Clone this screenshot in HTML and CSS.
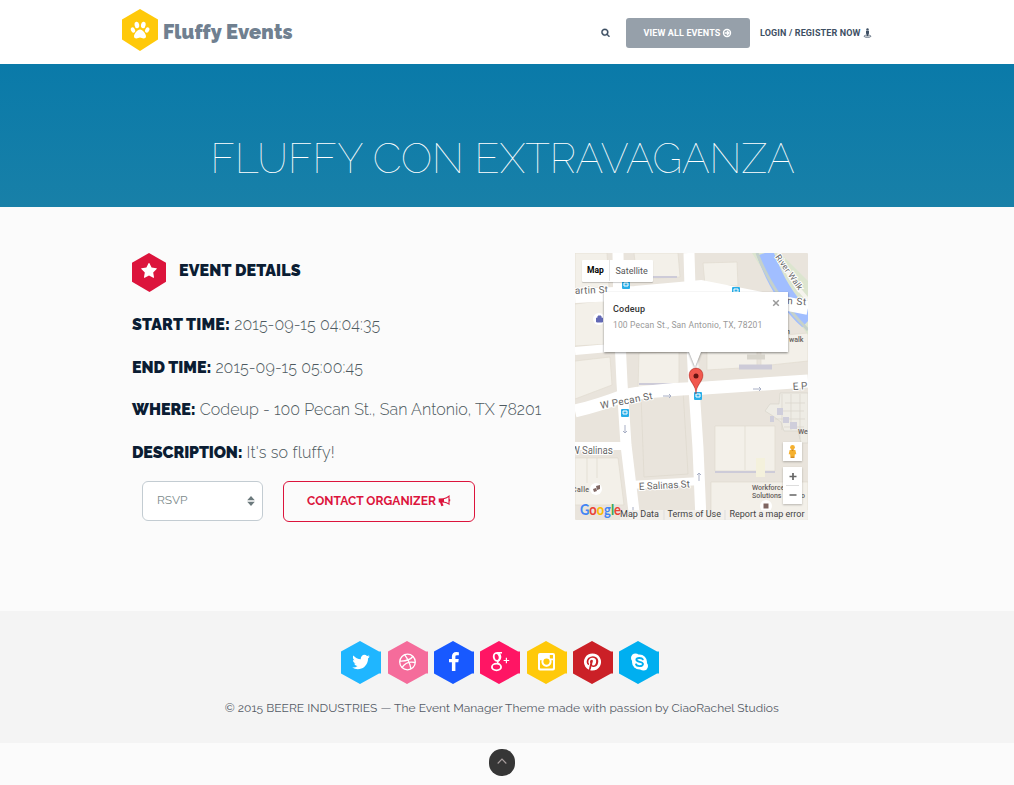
FILE: index.html
```
<!DOCTYPE html>
<html lang="en">
<head>
<meta charset="utf-8">
<title>Fluffy Events</title>
<link rel="stylesheet" href="styles.css">
</head>
<body>
<header class="header">
  <a class="brand">
    <svg class="brand-hex" viewBox="0 0 36 42"><path fill="#ffc90a" d="M18 0 36 10.500v20L18 42 0 30.500v-20z"/><g fill="#fff"><ellipse cx="14.900" cy="16" rx="2.300" ry="3.300" transform="rotate(-10 14.900 16)"/><ellipse cx="21.300" cy="16" rx="2.300" ry="3.300" transform="rotate(10 21.300 16)"/><ellipse cx="11" cy="21" rx="2" ry="2.800" transform="rotate(-25 11 21)"/><ellipse cx="25.200" cy="21" rx="2" ry="2.800" transform="rotate(25 25.200 21)"/><path d="M18 20.500c-2.600 0-6 4.300-6 6.700 0 1.600 1 2.200 2.400 2.200s2.200-.8 3.600-.8 2.200.8 3.600.8 2.400-.6 2.400-2.200c0-2.400-3.400-6.700-6-6.700z"/></g></svg>
    <span class="brand-name">Fluffy Events</span>
  </a>
  <nav class="nav">
    <svg class="ico-search" viewBox="0 0 1792 1792"><path fill="#3e4f63" stroke="#3e4f63" stroke-width="60" d="M1216 832q0-185-131.500-316.500t-316.500-131.500-316.500 131.500-131.500 316.500 131.500 316.500 316.500 131.500 316.500-131.500 131.500-316.500zm512 832q0 52-38 90t-90 38q-54 0-90-38l-343-342q-179 124-399 124-143 0-273.500-55.500t-225-150-150-225-55.500-273.500 55.500-273.500 150-225 225-150 273.500-55.500 273.500 55.500 225 150 150 225 55.500 273.500q0 220-124 399l343 343q37 37 37 90z"/></svg>
    <a class="btn-view"><span>VIEW ALL EVENTS</span><svg class="ico-nav" viewBox="0 0 10 10"><circle cx="5" cy="5" r="3.500" fill="none" stroke="#fff" stroke-width="1.400"/><path d="M2.600 5h4M5 3l2 2-2 2" fill="none" stroke="#fff" stroke-width="1.300"/></svg></a>
    <a class="login"><span>LOGIN / REGISTER NOW</span><svg class="ico-nav" viewBox="0 0 10 10"><g fill="#3e4f63"><circle cx="4.500" cy="1.400" r="1.200"/><path d="M3 2.800h3v3H5.600v2.400H3.400V5.800H3z"/></g><path d="M2.800 7.200C0 7.800.8 9.300 4.500 9.300s4.500-1.500 1.700-2.100" fill="none" stroke="#3e4f63" stroke-width=".8"/></svg></a>
  </nav>
</header>

<section class="banner"><h1 class="banner-title">FLUFFY CON EXTRAVAGANZA</h1></section>

<main class="main">
  <section class="details">
    <div class="details-head">
      <svg class="details-hex" viewBox="0 0 34 39"><path fill="#dc143c" d="M17 0 34 9.800v19L17.500 39 0 28.800v-19z"/><svg x="8.500" y="9.500" width="17" height="17" viewBox="0 0 1792 1792"><path fill="#fff" d="M1728 647q0 22-26 48l-363 354 86 500q1 7 1 20 0 21-10.500 35.500t-30.500 14.500q-19 0-40-12l-449-236-449 236q-22 12-40 12-21 0-31.500-14.500t-10.500-35.500q0-6 2-20l86-500-364-354q-25-27-25-48 0-37 56-46l502-73 225-455q19-41 49-41t49 41l225 455 502 73q56 9 56 46z"/></svg></svg>
      <h2 class="details-title">EVENT DETAILS</h2>
    </div>
    <p class="row"><b class="l-start">START TIME:</b><span class="v-time">2015-09-15 04:04:35</span></p>
    <p class="row row-end"><b>END TIME:</b><span class="v-time">2015-09-15 05:00:45</span></p>
    <p class="row"><b>WHERE:</b><span class="v-where">Codeup - 100 Pecan St., San Antonio, TX 78201</span></p>
    <p class="row"><b class="l-desc">DESCRIPTION:</b><span class="v-desc">It's so fluffy!</span></p>
    <div class="actions">
      <div class="select"><span>RSVP</span><svg class="ico-sort" viewBox="0 0 8 10"><path fill="#6c7a7d" d="M4 0 7.800 4.300H.2zM4 10 .2 5.700h7.600z"/></svg></div>
      <a class="btn-contact"><span>CONTACT ORGANIZER</span><svg class="ico-horn" viewBox="0 0 13 12"><path fill="#dc143c" d="M.6 3.600 6 3.200v4.300H4.200l1.400 3-2.200.7L2 7.600.8 7.400z"/><path fill="none" stroke="#dc143c" stroke-width="1.100" d="M5.500 3.700C7.900 3.300 9.800 2.300 11 1.200v7.900C9.700 8.100 7.900 7.300 5.500 7"/><path fill="#dc143c" d="M11 4.200h1.200v2H11z"/></svg></a>
    </div>
  </section>

  <section class="map">
    <svg class="map-art" viewBox="0 0 233 267">
      <rect width="233" height="267" fill="#e9e4dc"/>
      <g fill="#f3f0e9" stroke="#e1dbd0" stroke-width=".7">
        <path d="M0 0h32l2 34-34 3zM59 0h44l2 24-43 2zM128 10l34-1 1 24-33-1z"/>
        <path d="M0 51l32-4 4 44-36 2zM0 108l35-4 2 28-37 14zM64 100l40-1v31l-41 6z"/>
        <path d="M132 92h50v22l-50 3zM186 84l47-4v28l-47 5zM0 205h43l6 47H0zM140 173h60v45h-60zM136 229h97v38h-97z"/>
      </g>
      <g fill="none" stroke="#dcd6cb" stroke-width=".6"><path d="M66 142l42-5 5 84-44 3zM125 134l39-3M12 205v25M22 205v20M170 173v44"/></g>
      <path d="M66 24h36M64 131h42M140 219h60" stroke="#cdcbd8" stroke-width="2"/>
      <path d="M164 114h33" stroke="#cdcbd8" stroke-width="5"/>
      <path d="M172 104h18" stroke="#d8d5cc" stroke-width="5"/>
      <path d="M177 0h28l28 28v54Q204 43 177 0z" fill="#dce5cf"/>
      <path d="M190 0Q205 43 233 68" fill="none" stroke="#a1beff" stroke-width="17"/>
      <path d="M204 0Q211 23 233 47" fill="none" stroke="#f6f4ee" stroke-width="4"/>
      <path d="M182 0Q198 42 233 77" fill="none" stroke="#c5d1cb" stroke-width="3"/>
      <g fill="none" stroke="#fff" stroke-width="11">
        <path d="M43 0 44 65 47 130 51 192 60 267M114 0l2 70 3 65 4 60 3 72" />
        <path d="M0 43 60 40 126 34 233 55" stroke-width="14"/>
        <path d="M0 158Q22 153 48 143C75 137 110 136 130 135L233 128" stroke-width="13"/>
        <path d="M0 193h51M55 232l71-4M0 98l45-4" stroke-width="8"/>
      </g>
      <g fill="#eeece5" stroke="#d9d5cc" stroke-width=".7"><path d="M205 140h28v50h-7l-3-12h-14l-3-9-8-6-8-5 5-7h9z"/><path d="M210 150h20M205 158h24M200 166h30M209 174h20M207 141v36M216 141v36M225 141v45"/></g>
      <g fill="#cfcedb"><path d="M202 155h6v7h-6zM208 164h6v6h-6zM215 169h7v7h-7zM195 163h4v6h-4z"/></g>
      <path d="M181 205h9v19h-9z" fill="#f4f1dc"/>
      <g fill="none" stroke="#a8afc5" stroke-width="1"><path d="M88 143h8m-2-2 2 2-2 2M178 136h8m-2-2 2 2-2 2M50 172v8m-2-2 2 2 2-2M58 254v8m-2-2 2 2 2-2M124 228v-8m-2 2 2-2 2 2"/></g>
      <g fill="#28aee8"><rect x="47" y="28" width="8" height="8" rx="1"/><rect x="157" y="34" width="8" height="8" rx="1"/><rect x="46" y="156" width="8" height="8" rx="1"/><rect x="119" y="139" width="8" height="8" rx="1"/></g>
      <g fill="none" stroke="#fff"><path d="M49 30h4v3h-4zM159 36h4v3h-4zM48 158h4v3h-4zM121 141h4v3h-4z"/></g>
      <circle cx="24" cy="66" r="6" fill="#fff"/><path d="M21.500 65h6v4h-6zM23 65v-2h3v2" fill="#6269b5" stroke="#6269b5"/>
      <circle cx="21" cy="236" r="6" fill="#fff"/><path d="M18 236l3-1 1 3-3 1zM21 233l4-1v4l-3 1z" fill="#806763"/>
      <circle cx="191" cy="253" r="6" fill="#fff"/><path d="M188.500 250.500h5v5h-5z" fill="#806763"/>
      <g class="road-text">
        <text x="0" y="41" textLength="33" transform="rotate(-2 0 41)">artin St</text>
        <text x="212" y="51" textLength="19" transform="rotate(4 212 51)">n St</text>
        <text x="26" y="156" textLength="53" transform="rotate(-11 26 156)">W Pecan St</text>
        <text x="218" y="137" transform="rotate(-4 218 137)">E P</text>
        <text x="-4" y="201" textLength="42">W Salinas</text>
        <text x="64" y="237" textLength="51" transform="rotate(-3 64 237)">E Salinas St</text>
        <text class="river" x="200" y="4" textLength="41" transform="rotate(55 200 4)">River Walk</text>
      </g>
      <g class="place-text"><text x="-3" y="239" textLength="17">Calle</text><text x="177" y="237">Workforce</text><text x="177" y="245">Solutions</text><text x="223" y="181">We</text><text x="214" y="89">walk</text><text x="211" y="81">n</text><text x="226" y="245">o</text></g>
      <path d="M45 257h188v10H45z" fill="#f2f0ec" opacity=".8"/>
      <text class="google" x="5" y="262" textLength="41" lengthAdjust="spacingAndGlyphs"><tspan fill="#4285f4">G</tspan><tspan fill="#ea4335">o</tspan><tspan fill="#fbbc05">o</tspan><tspan fill="#4285f4">g</tspan><tspan fill="#34a853">l</tspan><tspan fill="#ea4335">e</tspan></text>
      <path fill="#ce3e35" stroke="#a83028" stroke-width=".4" d="M121 141c0-9-7-12-7-19a7 7 0 0 1 14 0c0 7-7 10-7 19z"/>
      <path fill="#f1584e" d="M121 140c0-9-6.500-12-6.500-18a6.500 6.500 0 0 1 13 0c0 6-6.500 9-6.500 18z"/><circle cx="121" cy="123" r="2.500" fill="#651411"/>
      <g class="credits"><text x="45" y="264" textLength="39">Map Data</text><text x="92.500" y="264" textLength="53.500">Terms of Use</text><text x="154.500" y="264" textLength="75">Report a map error</text></g>
      <path d="M89 257v10M150 257v10" stroke="#ddd"/>
      <path class="bubble" d="M29 39h184v60h-87l-6 15-6-15H29z"/>
    </svg>
    <div class="map-type"><b>Map</b><span>Satellite</span></div>
    <div class="info"><div class="info-name">Codeup</div><div class="info-addr">100 Pecan St., San Antonio, TX, 78201</div><svg class="info-close" viewBox="0 0 8 8"><path d="M1.200 1.200l5.600 5.600M6.800 1.200 1.200 6.800" stroke="#999" stroke-width="1.500"/></svg></div>
    <svg class="pegman" viewBox="0 0 20 20"><circle cx="10" cy="5.600" r="2.500" fill="#f5b02e"/><path d="M7 8.300h6l1 4.700h-1.500L12 16.500H8L7.500 13H6z" fill="#f5b02e"/><path d="M8.200 8h3.600L10 9.500zM8 15.500h4v1H8z" fill="#c77a14"/></svg>
    <svg class="zoomer" viewBox="0 0 19 37"><path d="M6.500 9.500h7M10 6v7M6.500 28h7" stroke="#666" stroke-width="1.700"/><path d="M3 18.500h13" stroke="#ddd"/></svg>
  </section>
</main>

<footer class="footer">
  <div class="social">
    <svg class="hex" viewBox="0 0 40 43"><path fill="#1fb6ff" d="M19 0 38 10.500h2v22h-2L19 43 0 32.500v-22z"/><svg x="10" y="11" width="20" height="20" viewBox="0 0 1792 1792"><path fill="#fff" d="M1684 408q-67 98-162 167 1 14 1 42 0 130-38 259.500t-115.500 248.500-184.500 210.500-258 146-323 54.500q-271 0-496-145 35 4 78 4 225 0 401-138-105-2-188-64.500t-114-159.500q33 5 61 5 43 0 85-11-112-23-185.500-111.500t-73.500-205.500v-4q68 38 146 41-66-44-105-115t-39-154q0-88 44-163 121 149 294.500 238.500t371.500 99.500q-8-38-8-74 0-134 94.500-228.500t228.500-94.500q140 0 236 102 109-21 205-78-37 115-142 178 93-10 186-50z"/></svg></svg>
    <svg class="hex" viewBox="0 0 40 43"><path fill="#f56c9b" d="M19 0 38 10.500h2v22h-2L19 43 0 32.500v-22z"/><g fill="none" stroke="#fff" stroke-width="1.300"><circle cx="19.500" cy="21" r="7.800"/><path d="M16.500 13.700c3.500 4.500 5.500 9 6.500 14.300M11.800 20c6 .3 10.500-1 13.500-5M14 26.700c3-5 7.500-6.500 13.200-5.200"/></g></svg>
    <svg class="hex" viewBox="0 0 40 43"><path fill="#1859ff" d="M19 0 38 10.500h2v22h-2L19 43 0 32.500v-22z"/><svg x="9.500" y="11" width="20.500" height="20.500" viewBox="0 0 1792 1792"><path fill="#fff" d="M1343 12v264h-157q-86 0-116 36t-30 108v189h293l-39 296h-254v759h-306v-759h-255v-296h255v-218q0-186 104-288.500t277-102.500q147 0 228 12z"/></svg></svg>
    <svg class="hex" viewBox="0 0 40 43"><path fill="#ff1564" d="M19 0 38 10.500h2v22h-2L19 43 0 32.500v-22z"/><g fill="none" stroke="#fff"><ellipse cx="16.700" cy="16" rx="2.900" ry="3.900" stroke-width="1.900" transform="rotate(-12 16.700 16)"/><path d="M16.500 11.700h5.500M19 12.200c2.200 2.200 2.200 5.300 0 7.200-3 2-.6 3 1 4.600" stroke-width="1.400"/><ellipse cx="16.500" cy="26" rx="4.600" ry="3.300" stroke-width="1.800"/><path d="M23.600 19.500h5.600M26.400 16.700v5.600" stroke-width="1.200"/></g></svg>
    <svg class="hex" viewBox="0 0 40 43"><path fill="#ffc90a" d="M19 0 38 10.500h2v22h-2L19 43 0 32.500v-22z"/><path fill="#fff" fill-rule="evenodd" d="M13 12h13a2 2 0 0 1 2 2v13.500a2 2 0 0 1-2 2H13a2 2 0 0 1-2-2V14a2 2 0 0 1 2-2zm9.800 2v3.400h3.200V14zM13 19.300v7.200c0 .7.300 1 1 1h11c.7 0 1-.3 1-1v-7.200h-1.700a5 5 0 1 1-9.600 0z"/><circle cx="19.500" cy="20.600" r="3.900" fill="none" stroke="#fff" stroke-width="1.800"/><circle cx="19.500" cy="20.600" r="3.100" fill="#ffc90a"/></svg>
    <svg class="hex" viewBox="0 0 40 43"><path fill="#cb2027" d="M19 0 38 10.500h2v22h-2L19 43 0 32.500v-22z"/><svg x="9.500" y="11" width="20" height="20" viewBox="0 0 1792 1792"><path fill="#fff" d="M1664 896q0 209-103 385.500t-279.500 279.500-385.500 103q-111 0-218-32 59-93 78-164 9-34 54-211 20 39 73 67.500t114 28.500q121 0 216-68.500t147-188.500 52-270q0-114-59.500-214t-172.500-163-255-63q-105 0-196 29t-154.500 77-109 110.500-67 129.500-21.500 134q0 104 40 183t117 111q30 12 38-20 2-7 8-31t8-30q6-23-11-43-51-61-51-151 0-151 104.500-259.500t273.500-108.500q151 0 235.500 82t84.500 213q0 170-68.500 289t-175.500 119q-61 0-98-43.500t-23-104.500q8-35 26.500-93.500t30-103 11.500-75.500q0-50-27-83t-77-33q-62 0-105 57t-43 142q0 73 25 122l-99 418q-17 70-13 177-206-91-333-281t-127-423q0-209 103-385.500t279.500-279.500 385.500-103 385.500 103 279.500 279.500 103 385.500z"/></svg></svg>
    <svg class="hex" viewBox="0 0 40 43"><path fill="#00aff0" d="M19 0 38 10.500h2v22h-2L19 43 0 32.500v-22z"/><circle cx="20.500" cy="21" r="7.500" fill="#fff"/><circle cx="16.500" cy="17" r="4.500" fill="#fff"/><circle cx="24.500" cy="25" r="4.500" fill="#fff"/><path d="M23.800 18.300c-.8-1.700-6.400-2.100-6.400.4 0 2.900 6.600 1.300 6.600 4.400 0 2.800-6.400 2.500-7 .2" fill="none" stroke="#00aff0" stroke-width="1.900" stroke-linecap="round"/></svg>
  </div>
  <p class="copy">© 2015 BEERE INDUSTRIES — The Event Manager Theme made with passion by CiaoRachel Studios</p>
</footer>
<div class="totop"><svg class="totop-btn" viewBox="0 0 26 27"><rect width="26" height="27" rx="12.500" fill="#363636"/><path d="M8.700 14.500 13 10l4.300 4.500" fill="none" stroke="#aaa0a0" stroke-width="1.100"/></svg></div>
</body>
</html>
```
FILE: styles.css
```
* { box-sizing: border-box; }
body { margin: 0; background: #fbfbfb; font-family: Raleway, Lato, sans-serif; min-height: 785px; overflow: hidden; }
h1, h2, p { margin: 0; }
svg { display: block; flex: none; }
span, b, h1, h2 { white-space: nowrap; }

.header { height: 64px; background: #fff; padding: 0 142px 0 122px; display: flex; justify-content: space-between; }
.brand { display: flex; padding-top: 9px; gap: 5px; }
.brand-hex { width: 36px; height: 42px; }
.brand-name { font-size: 20px; font-weight: 900; line-height: 46px; color: #708090; letter-spacing: .1px; }
.nav { display: flex; align-items: center; height: 66px; font-family: Roboto, sans-serif; font-size: 9px; font-weight: 700; letter-spacing: .13px; }
.ico-search { width: 9px; height: 9px; margin: -1px 16px 0 0; }
.btn-view { width: 124px; height: 30px; border-radius: 3px; background: #96a0aa; color: #fff; display: flex; align-items: center; justify-content: center; gap: 2px; margin-right: 10px; }
.login { display: flex; align-items: center; gap: 2px; color: #3e4f63; width: 112px; }
.ico-nav { width: 10px; height: 10px; }

.banner { height: 143px; background: linear-gradient(#0a7aa9, #1880a8); display: flex; justify-content: center; padding: 70px 9px 0 0; }
.banner-title { font-size: 41px; line-height: 50px; font-weight: 100; color: #fff; letter-spacing: -.03px; }

.main { height: 404px; padding: 46px 206px 0 132px; display: flex; justify-content: space-between; }
.details { width: 430px; }
.details-head { display: flex; gap: 13px; height: 50px; }
.details-hex { width: 34px; height: 39px; }
.details-title { font-size: 16px; line-height: 36px; font-weight: 900; color: #0b1d33; letter-spacing: .14px; }
.row { display: flex; gap: 4px; align-items: center; height: 42.600px; font-size: 16px; color: #4e5a60; font-weight: 300; }
.row b { font-weight: 900; color: #0b1d33; }
.row-end { padding-top: 1px; }
.row .l-start { letter-spacing: .2px; }
.row .l-desc { letter-spacing: -.12px; }
.v-time { letter-spacing: .1px; }
.v-where { letter-spacing: .04px; }
.v-desc { letter-spacing: .15px; }
.actions { display: flex; gap: 20px; padding: 8px 0 0 10px; }
.select { width: 121px; height: 40px; border: 1px solid #c3ccd2; border-radius: 6px; background: #fff; display: flex; align-items: center; justify-content: space-between; padding: 0 7px 2px 14px; font-size: 12px; color: #7b8a8b; }
.ico-sort { width: 8px; height: 10px; margin-top: 2px; }
.btn-contact { width: 192px; height: 41px; border: 1px solid #dc143c; border-radius: 6px; display: flex; align-items: center; justify-content: center; gap: 2px; padding-bottom: 1px; color: #dc143c; font-size: 12px; font-weight: 700; letter-spacing: .06px; }
.ico-horn { width: 13px; height: 12px; }

.map { width: 233px; height: 267px; position: relative; font-family: Roboto, sans-serif; overflow: hidden; border-radius: 1px; }
.map-art { width: 233px; height: 267px; }
.road-text { font-size: 10px; fill: #666; stroke: #fff; stroke-width: 2px; paint-order: stroke; }
.river { font-size: 8.500px; }
.place-text { font-size: 7px; font-weight: 500; fill: #665f5c; }
.google { font-family: Lato, sans-serif; font-size: 15px; font-weight: 700; }
.credits { font-size: 9px; fill: #444; }
.bubble { fill: #fff; filter: drop-shadow(0 1px 1px rgba(0, 0, 0, .45)); }
.map-type { position: absolute; left: 7px; top: 7px; width: 71px; height: 22px; background: #fff; border-radius: 1px; box-shadow: 0 1px 1px rgba(0, 0, 0, .2); display: flex; align-items: center; padding-bottom: 1px; font-size: 9px; color: #565656; }
.map-type b { width: 28px; padding-left: 5px; line-height: 21px; border-right: 1px solid #e5e5e5; font-size: 8.500px; color: #000; }
.map-type span { padding-left: 5.500px; }
.info { position: absolute; left: 29px; top: 39px; width: 184px; height: 60px; padding: 11px 0 0 9px; }
.info-name { font-size: 9px; line-height: 13px; font-weight: 500; color: #333; letter-spacing: .2px; }
.info-addr { font-size: 8.500px; line-height: 12px; margin-top: 3px; color: #999; white-space: nowrap; letter-spacing: .16px; }
.info-close { position: absolute; left: 168px; top: 7px; width: 8px; height: 8px; }
.pegman, .zoomer { position: absolute; left: 208px; background: #fff; box-shadow: 0 1px 2px rgba(0, 0, 0, .25); }
.pegman { top: 189px; width: 19px; height: 19px; }
.zoomer { top: 214px; width: 19px; height: 37px; }

.footer { height: 132px; background: #f4f4f4; padding: 30px 13.500px 0 0; }
.social { display: flex; justify-content: center; gap: 6.330px; }
.hex { width: 40px; height: 43px; }
.copy { margin: 15px -3px 0 0; line-height: 18px; font-size: 12px; color: #545b66; text-align: center; white-space: nowrap; letter-spacing: .035px; }
.totop { display: flex; justify-content: center; padding: 6px 10px 0 0; }
.totop-btn { width: 26px; height: 27px; }
```
